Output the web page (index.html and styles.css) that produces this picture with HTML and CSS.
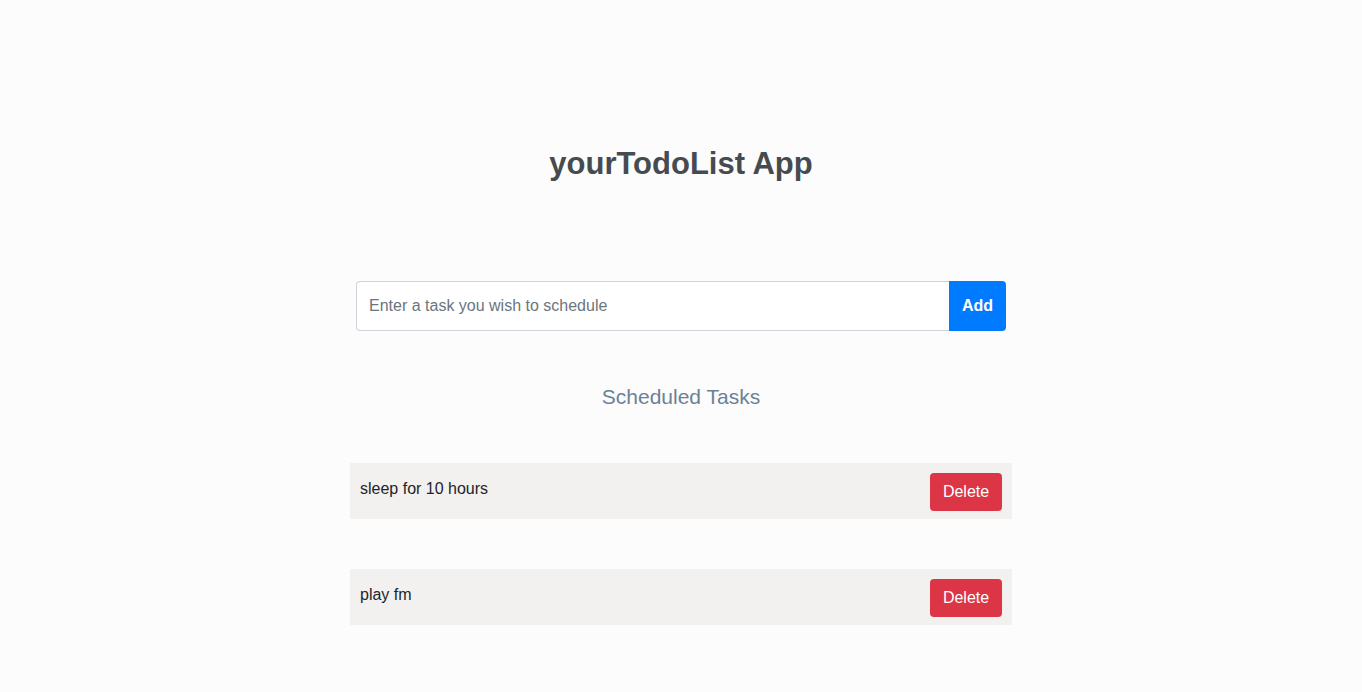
FILE: index.html
```html
<!DOCTYPE html>
<html lang="en">
<head>
<meta charset="utf-8">
<title>yourTodoList App</title>
<link rel="stylesheet" href="styles.css">
</head>
<body>
<div class="app">
  <h1 class="title">yourTodoList App</h1>
  <form class="add-form">
    <input class="task-input" type="text" placeholder="Enter a task you wish to schedule">
    <button class="add-btn" type="button">Add</button>
  </form>
  <h2 class="subtitle">Scheduled Tasks</h2>
  <ul class="task-list">
    <li class="task">
      <span class="task-text">sleep for 10 hours</span>
      <button class="delete-btn" type="button">Delete</button>
    </li>
    <li class="task">
      <span class="task-text">play fm</span>
      <button class="delete-btn" type="button">Delete</button>
    </li>
  </ul>
</div>
</body>
</html>
```
FILE: styles.css
```css
* { box-sizing: border-box; }
html, body {
  margin: 0;
  padding: 0;
  background: #fcfcfc;
  font-family: "Liberation Sans", Arial, sans-serif;
}
.app {
  width: 662px;
  margin: 0 auto;
  padding-top: 145px;
}
.title {
  margin: 0;
  text-align: center;
  font-size: 31px;
  line-height: 37px;
  font-weight: 700;
  color: #464b50;
}
.add-form {
  display: flex;
  width: 650px;
  height: 50px;
  margin: 99px auto 0;
}
.task-input {
  flex: 1;
  height: 50px;
  padding: 0 12px;
  border: 1px solid #ced4da;
  border-right: none;
  border-radius: 4px 0 0 4px;
  background: #fff;
  font-family: inherit;
  font-size: 16px;
  color: #495057;
  outline: none;
}
.task-input::placeholder { color: #6c757d; }
.add-btn {
  width: 57px;
  height: 50px;
  border: none;
  border-radius: 0 4px 4px 0;
  background: #007bff;
  color: #fff;
  font-family: inherit;
  font-size: 16px;
  font-weight: 700;
  padding: 0;
}
.subtitle {
  margin: 54px 0 0;
  text-align: center;
  font-size: 21px;
  line-height: 24px;
  font-weight: 400;
  color: #6b8296;
}
.task-list {
  list-style: none;
  margin: 54px 0 0;
  padding: 0;
  display: flex;
  flex-direction: column;
  gap: 50px;
}
.task {
  display: flex;
  justify-content: space-between;
  align-items: flex-start;
  height: 56px;
  padding: 10px;
  background: #f2f1f0;
}
.task-text {
  padding-top: 4px;
  font-size: 16px;
  line-height: 24px;
  color: #212529;
}
.delete-btn {
  width: 72px;
  height: 38px;
  border: none;
  border-radius: 4px;
  background: #dc3545;
  color: #fff;
  font-family: inherit;
  font-size: 16px;
  padding: 0;
}
```
